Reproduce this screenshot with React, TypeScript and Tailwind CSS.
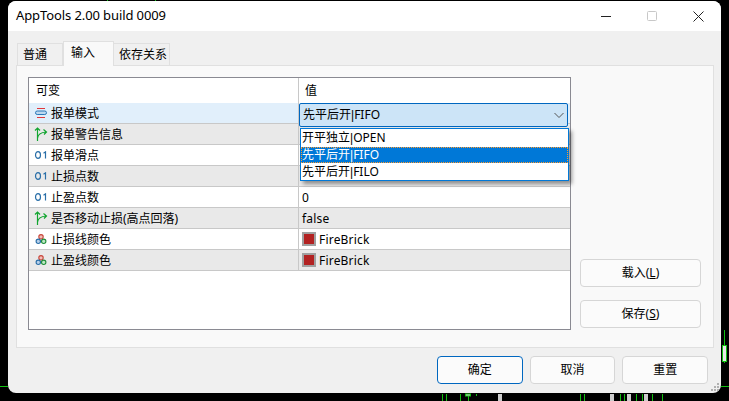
const font = { fontFamily: '"Noto Sans", "Noto Sans CJK SC", sans-serif' }

function EnumIcon() {
  return (
    <svg width="16" height="16" viewBox="0 0 16 16" fill="none">
      <path d="M4 3.500h8" stroke="#e0383a" strokeWidth="1" />
      <rect x="2.500" y="6" width="11" height="3.500" rx="1.700" fill="#bcd8f0" stroke="#2a78b8" strokeWidth="1" />
      <path d="M4 12.500h8" stroke="#e0383a" strokeWidth="1" />
    </svg>
  )
}

function BoolIcon() {
  return (
    <svg width="16" height="16" viewBox="0 0 16 16" fill="none" stroke="#12a530" strokeWidth="1.200">
      <path d="M4.500 15V2M2 4.500 4.500 2 7 4.500" />
      <path d="M4.500 12c.5-4 3-5.500 8.500-6M10.500 3.500 13.500 6 11 8.500" />
    </svg>
  )
}

function NumIcon() {
  return (
    <svg width="16" height="16" viewBox="0 0 16 16" fill="none" stroke="#2a6fa8" strokeWidth="1.200">
      <ellipse cx="5" cy="8" rx="2.500" ry="3.300" />
      <path d="M10.500 6.200 12.500 4.800V11.500" />
    </svg>
  )
}

function ColorIcon() {
  return (
    <svg width="16" height="16" viewBox="0 0 16 16" fill="none" strokeWidth="1.100">
      <circle cx="8" cy="5.800" r="2.200" fill="#f0c0b8" stroke="#c8453a" />
      <circle cx="5.300" cy="10.300" r="2.200" fill="#b8d0ea" stroke="#2a6fa8" />
      <circle cx="10.700" cy="10.300" r="2.200" fill="#bfe6c4" stroke="#1f8f3a" />
    </svg>
  )
}

const rows = [
  { icon: <EnumIcon />, name: '报单模式', value: null, bg: 'bg-[#e1effb]' },
  { icon: <BoolIcon />, name: '报单警告信息', value: null, bg: 'bg-[#e9e9e9]' },
  { icon: <NumIcon />, name: '报单滑点', value: null, bg: 'bg-white' },
  { icon: <NumIcon />, name: '止损点数', value: null, bg: 'bg-[#e9e9e9]' },
  { icon: <NumIcon />, name: '止盈点数', value: '0', bg: 'bg-white' },
  { icon: <BoolIcon />, name: '是否移动止损(高点回落)', value: 'false', bg: 'bg-[#e9e9e9]' },
  { icon: <ColorIcon />, name: '止损线颜色', value: 'FireBrick', color: true, bg: 'bg-white' },
  { icon: <ColorIcon />, name: '止盈线颜色', value: 'FireBrick', color: true, bg: 'bg-[#e9e9e9]' },
]

function Button({ children, primary }: { children: React.ReactNode; primary?: boolean }) {
  return (
    <button
      className={`flex items-center justify-center rounded-[4px] border bg-[#fbfbfb] text-[12px] text-black ${
        primary ? 'border-[#0067c0]' : 'border-[#d6d6d6]'
      } h-[28px]`}
    >
      {children}
    </button>
  )
}

function Option({ cn, latin }: { cn: string; latin: string }) {
  return (
    <span>
      {cn}
      <span className="font-['Liberation_Sans']">|</span>
      {latin}
    </span>
  )
}

function Background() {
  // bits of the chart behind the dialog
  return (
    <svg className="absolute inset-0" width="729" height="401" fill="none" stroke="#12c012">
      <path d="M107.500 0v1M155.500 0v1M0 386.500h8M721 386.500h8M724.500 330v33" />
      <rect x="722.500" y="345.500" width="4" height="16" fill="#e8e8e8" />
      <path d="M442.500 394v7M446.500 394v7M460.500 394v7M468.500 394v7M476.500 394v2M580.500 394v7M584.500 394v7M620.500 394v7M624.500 394v7M636.500 394v7M642.500 394v7M652.500 394v7M662.500 394v7" />
      <rect x="465.500" y="394" width="5" height="2" fill="#cccccc" />
      <rect x="498" y="394" width="4" height="7" fill="#cccccc" stroke="none" />
      <rect x="610" y="394" width="4" height="7" fill="#cccccc" stroke="none" />
      <rect x="627" y="394" width="4" height="7" fill="#cccccc" stroke="none" />
      <rect x="644" y="394" width="4" height="7" fill="#cccccc" stroke="none" />
    </svg>
  )
}

export default function App() {
  return (
    <div className="relative h-[401px] w-[729px] overflow-hidden bg-black pl-2 pt-px" style={font}>
      <Background />
      <div className="relative flex h-[392px] w-[713px] flex-col overflow-hidden rounded-lg bg-[#f0f0f0] text-[12px] text-black">
        {/* Title bar */}
        <div className="flex h-[30px] shrink-0 items-center bg-white pl-2">
          <span className="flex-1 text-[13px] tracking-[-0.1px]">AppTools 2.00 build 0009</span>
          <div className="flex items-center gap-[35px] pr-[17px]">
            <svg width="11" height="11" viewBox="0 0 11 11" stroke="#222" fill="none">
              <path d="M0 5.500h10" />
            </svg>
            <svg width="11" height="11" viewBox="0 0 11 11" stroke="#c8c8c8" fill="none">
              <rect x="0.500" y="0.500" width="9" height="9" rx="1" />
            </svg>
            <svg width="11" height="11" viewBox="0 0 11 11" stroke="#222" fill="none">
              <path d="M0.500 0.500l10 10M10.500 0.500l-10 10" />
            </svg>
          </div>
        </div>

        <div className="flex flex-1 flex-col pl-2 pr-[7px] pt-[10px]">
          {/* Tabs */}
          <div className="flex h-[24px] items-end pl-px">
            <div className="flex h-[22px] w-[46px] items-center border border-b-0 border-[#e0e0e0] bg-[#f0f0f0] pl-[5px] text-[12px]">
              普通
            </div>
            <div className="relative z-10 -mb-px flex h-[25px] w-[51px] items-start border border-b-0 border-[#e0e0e0] bg-[#f9f9f9] pl-[7px] pt-[2px] text-[12px]">
              输入
            </div>
            <div className="flex h-[22px] w-[56px] items-center border border-b-0 border-l-0 border-[#e0e0e0] bg-[#f0f0f0] pl-[5px] text-[12px]">
              依存关系
            </div>
          </div>

          {/* Panel */}
          <div className="flex h-[283px] border border-[#e0e0e0] bg-[#f9f9f9] pl-[11px] pt-[11px]">
            <div className="relative h-[253px] w-[543px] shrink-0 border border-[#8a8a92] bg-white">
              <div className="grid h-[25px] grid-cols-[269px_1fr] items-center">
                <span className="pl-[7px] text-[12px]">可变</span>
                <span className="flex h-full items-center border-l border-[#c8c8c8] pl-[6px] text-[12px]">值</span>
              </div>
              {rows.map((row) => (
                <div
                  key={row.name}
                  className={`grid h-[21px] grid-cols-[269px_1fr] items-center border-b border-[#c8c8c8] ${row.bg}`}
                >
                  <div className="flex items-center">
                    <span className="ml-[4px] mr-[2px] flex w-[16px] justify-center">{row.icon}</span>
                    <span className="pt-px text-[12px] leading-none">{row.name}</span>
                  </div>
                  <div className="flex h-full items-center gap-[3px] border-l border-[#c8c8c8] pl-[3px] text-[12px] leading-none">
                    {row.color && <span className="h-[14px] w-[14px] border-2 border-[#a0a0a0] bg-[#b22222]" />}
                    <span className="pt-px tracking-[0.2px]">{row.value}</span>
                  </div>
                </div>
              ))}

              {/* Combo box */}
              <div className="absolute left-[270px] top-[25px] flex h-[24px] w-[269px] items-center justify-between rounded-[2px] border border-[#0067c0] bg-[#cce4f7] pl-[3px] pr-[2px] text-[12px]">
                <Option cn="先平后开" latin="FIFO" />
                <svg width="12" height="12" viewBox="0 0 12 12" fill="none" stroke="#555">
                  <path d="M1.500 4 6 8.500 10.500 4" />
                </svg>
              </div>

              {/* Dropdown list */}
              <div className="absolute left-[271px] top-[50px] flex h-[53px] w-[269px] flex-col border border-[#0078d7] bg-white text-[12px] shadow-[3px_3px_4px_rgba(0,0,0,0.4)]">
                <div className="flex h-[18px] items-center pl-px">
                  <Option cn="开平独立" latin="OPEN" />
                </div>
                <div className="flex h-[16px] items-center border border-dotted border-[#ff9a2e] bg-[#0078d7] text-white">
                  <Option cn="先平后开" latin="FIFO" />
                </div>
                <div className="flex h-[17px] items-center pl-px">
                  <Option cn="先平后开" latin="FILO" />
                </div>
              </div>
            </div>

            <div className="ml-[9px] flex h-[253px] w-[121px] flex-col justify-end gap-[13px] pb-[2px]">
              <Button>
                <span>
                  载入(<span className="underline">L</span>)
                </span>
              </Button>
              <Button>
                <span>
                  保存(<span className="underline">S</span>)
                </span>
              </Button>
            </div>
          </div>

          {/* Footer */}
          <div className="mt-2 flex justify-end pr-[6px]">
            <div className="grid w-[271px] grid-cols-3 gap-[7px]">
              <Button primary>确定</Button>
              <Button>取消</Button>
              <Button>重置</Button>
            </div>
          </div>
        </div>

        {/* Resize grip */}
        <svg className="absolute bottom-[1px] right-[1px]" width="9" height="9" fill="#b0b0b0">
          <rect x="6" y="0" width="2" height="2" />
          <rect x="3" y="3" width="2" height="2" />
          <rect x="6" y="3" width="2" height="2" />
          <rect x="0" y="6" width="2" height="2" />
          <rect x="3" y="6" width="2" height="2" />
          <rect x="6" y="6" width="2" height="2" />
        </svg>
      </div>
    </div>
  )
}
